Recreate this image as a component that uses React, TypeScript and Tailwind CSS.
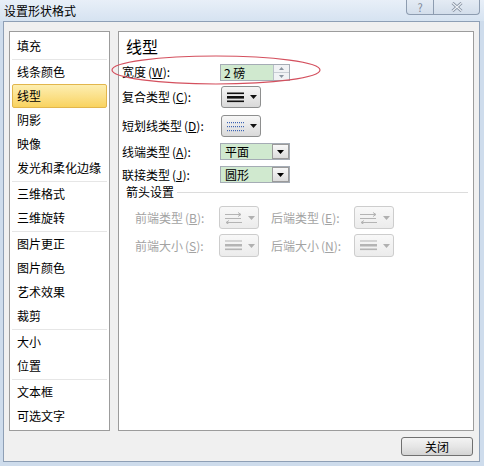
import React from "react";

const items: string[][] = [
  ["填充"],
  ["线条颜色", "线型", "阴影", "映像", "发光和柔化边缘"],
  ["三维格式", "三维旋转"],
  ["图片更正", "图片颜色", "艺术效果", "裁剪"],
  ["大小", "位置"],
  ["文本框", "可选文字"],
];

const Tri = ({ color = "#000" }: { color?: string }) => (
  <svg width="7" height="4" viewBox="0 0 7 4">
    <path d="M0 0H7L3.5 4Z" fill={color} />
  </svg>
);

const CompoundIcon = () => (
  <svg width="17" height="11" viewBox="0 0 17 11">
    <rect x="0" y="0.5" width="17" height="1.6" fill="#111" />
    <rect x="0" y="4" width="17" height="2.6" fill="#111" />
    <rect x="0" y="8.5" width="17" height="1.6" fill="#111" />
  </svg>
);

const DashIcon = () => (
  <svg width="17" height="11" viewBox="0 0 17 11">
    {[1, 5, 9].map((y) =>
      [0, 2, 4, 6, 8, 10, 12, 14, 16].map((x) => (
        <rect key={`${x}-${y}`} x={x} y={y} width="1" height="1.2" fill="#3c64b4" />
      ))
    )}
  </svg>
);

const ArrowIcon = () => (
  <svg width="17" height="12" viewBox="0 0 17 12" fill="none" stroke="#b4b4b4">
    <path d="M0 2.5H16M13 0.5L16 2.5L13 4.5" />
    <path d="M0 6.5H16" />
    <path d="M1 10.5H17M4 8.5L1 10.5L4 12.5" />
  </svg>
);

const SizeIcon = () => (
  <svg width="17" height="11" viewBox="0 0 17 11">
    <rect x="0" y="0.5" width="17" height="1" fill="#b4b4b4" />
    <rect x="0" y="4" width="17" height="2.5" fill="#b4b4b4" />
    <rect x="0" y="8.5" width="17" height="1.6" fill="#b4b4b4" />
  </svg>
);

const Drop = ({ icon, disabled }: { icon: React.ReactNode; disabled?: boolean }) => (
  <div
    className={
      disabled
        ? "flex h-full w-[40px] items-center gap-[6px] rounded-[3px] border border-[#cdcdcd] bg-gradient-to-b from-[#f8f8f8] to-[#ececec] pl-[5px]"
        : "flex h-full w-[40px] items-center gap-[6px] rounded-[3px] border border-[#8e8f8f] bg-gradient-to-b from-[#f7f7f7] to-[#d9d9d9] pl-[5px]"
    }
  >
    {icon}
    <Tri color={disabled ? "#b0b0b0" : "#111"} />
  </div>
);

const Combo = ({ value }: { value: string }) => (
  <div className="flex h-[17px] w-[70px] border border-[#a5acb5]">
    <div className="flex-1 bg-[#d0e9cf] pl-[4px] text-[12px] leading-[15px]">{value}</div>
    <div className="flex w-[17px] items-center justify-center border border-[#9a9a9a] bg-gradient-to-b from-[#f8f8f8] to-[#dcdcdc]">
      <Tri />
    </div>
  </div>
);

const Label = ({ text, k, gray, w }: { text: string; k: string; gray?: boolean; w: string }) => (
  <div className={`${w} whitespace-nowrap ${gray ? "text-[#a3a3a3]" : "text-black"}`}>
    {text}
    <span className="ml-[2px]">
      (<span className="underline">{k}</span>):
    </span>
  </div>
);

export default function App() {
  return (
    <div className="relative h-[466px] w-[484px] overflow-hidden bg-[#cedcec] font-['Noto_Sans_CJK_SC',sans-serif] text-[12px] text-black">
      {/* title bar */}
      <div className="flex h-[21px] items-start justify-between bg-gradient-to-b from-[#e8eff8] to-[#d6e3f1]">
        <div className="pl-[4px] pt-[2px] leading-[17px]">设置形状格式</div>
        <div className="mr-[4px] flex h-[15px] overflow-hidden rounded-b-[4px] border border-t-0 border-[#8d9cb0] bg-gradient-to-b from-[#e4ebf4] to-[#d3deeb]">
          <div className="flex w-[27px] items-center justify-center border-r border-[#8d9cb0] text-[11px] leading-none text-[#7d8898]">
            ?
          </div>
          <div className="flex w-[45px] items-center justify-center">
            <svg width="12" height="10" viewBox="0 0 12 10">
              <path d="M1.5 1L10.5 9M10.5 1L1.5 9" stroke="#8591a1" strokeWidth="3" />
              <path d="M1.5 1L10.5 9M10.5 1L1.5 9" stroke="#eef2f7" strokeWidth="1.2" />
            </svg>
          </div>
        </div>
      </div>

      {/* client area */}
      <div className="ml-[3px] w-[477px] border border-[#8e9fb5] bg-[#f0f0f0] px-[5px] pb-[5px] pt-[9px]">
        <div className="flex h-[400px] gap-[8px]">
          {/* category list */}
          <div className="w-[101px] border border-[#9c9c9c] bg-white pt-[2px]">
            {items.map((group, gi) => (
              <div key={gi}>
                {gi > 0 && <div className="mx-[2px] my-[0.5px] h-px bg-[#e6e6e6]" />}
                {group.map((it) =>
                  it === "线型" ? (
                    <div
                      key={it}
                      className="mx-[2px] flex h-[24px] items-center rounded-[2px] border border-[#e2b64c] bg-gradient-to-b from-[#fdeeb0] to-[#f9d35e] pl-[4px]"
                    >
                      {it}
                    </div>
                  ) : (
                    <div key={it} className="mx-[2px] flex h-[24px] items-center pl-[5px]">
                      {it}
                    </div>
                  )
                )}
              </div>
            ))}
          </div>

          {/* settings panel */}
          <div className="flex flex-1 flex-col border border-[#9c9c9c] bg-white pl-[3px]">
            <div className="ml-[4px] mt-[3px] flex h-[22px] items-center text-[16px]">线型</div>

            <div className="mt-[4px] flex h-[22px] items-center">
              <Label text="宽度" k="W" w="w-[98px]" />
              <div className="flex h-[17px] w-[70px] border border-[#a5acb5]">
                <div className="flex-1 bg-[#d0e9cf] pl-[3px] leading-[15px]">2 磅</div>
                <div className="flex w-[16px] flex-col border-l border-[#b8c0c8] bg-[#f0f2f4]">
                  <div className="flex flex-1 items-center justify-center border-b border-[#c8ced4]">
                    <svg width="5" height="3" viewBox="0 0 5 3">
                      <path d="M0 3H5L2.5 0Z" fill="#8a94a0" />
                    </svg>
                  </div>
                  <div className="flex flex-1 items-center justify-center">
                    <svg width="5" height="3" viewBox="0 0 5 3">
                      <path d="M0 0H5L2.5 3Z" fill="#8a94a0" />
                    </svg>
                  </div>
                </div>
              </div>
            </div>

            <div className="mt-[3px] flex h-[22px] items-center">
              <Label text="复合类型" k="C" w="w-[99px]" />
              <Drop icon={<CompoundIcon />} />
            </div>

            <div className="mt-[7px] flex h-[22px] items-center">
              <Label text="短划线类型" k="D" w="w-[99px]" />
              <Drop icon={<DashIcon />} />
            </div>

            <div className="mt-[5px] flex h-[19px] items-center">
              <Label text="线端类型" k="A" w="w-[98px]" />
              <Combo value="平面" />
            </div>

            <div className="mt-[4px] flex h-[19px] items-center">
              <Label text="联接类型" k="J" w="w-[98px]" />
              <Combo value="圆形" />
            </div>

            <div className="flex h-[16px] items-center pl-[4px]">
              <span>箭头设置</span>
              <div className="ml-[3px] mr-[5px] h-px flex-1 bg-[#dcdcdc]" />
            </div>

            <div className="mt-[6px] flex h-[23px] items-center pl-[13px]">
              <Label text="前端类型" k="B" gray w="w-[84px]" />
              <Drop icon={<ArrowIcon />} disabled />
              <div className="ml-[12px]">
                <Label text="后端类型" k="E" gray w="w-[83px]" />
              </div>
              <Drop icon={<ArrowIcon />} disabled />
            </div>

            <div className="mt-[5px] flex h-[23px] items-center pl-[13px]">
              <Label text="前端大小" k="S" gray w="w-[84px]" />
              <Drop icon={<SizeIcon />} disabled />
              <div className="ml-[12px]">
                <Label text="后端大小" k="N" gray w="w-[83px]" />
              </div>
              <Drop icon={<SizeIcon />} disabled />
            </div>
          </div>
        </div>

        <div className="mt-[6px] flex justify-end pr-[1px]">
          <button className="flex h-[19px] w-[72px] items-center justify-center rounded-[3px] border border-[#707070] bg-gradient-to-b from-[#f3f3f3] via-[#e6e6e6] to-[#d4d4d4] text-[12px] leading-none">
            关闭
          </button>
        </div>
      </div>

      {/* red annotation ellipse */}
      <svg className="pointer-events-none absolute left-[110px] top-[54px]" width="216" height="34" viewBox="0 0 216 34">
        <ellipse cx="106" cy="16" rx="104" ry="14" fill="none" stroke="#d4505e" strokeWidth="1.2" />
      </svg>
    </div>
  );
}
